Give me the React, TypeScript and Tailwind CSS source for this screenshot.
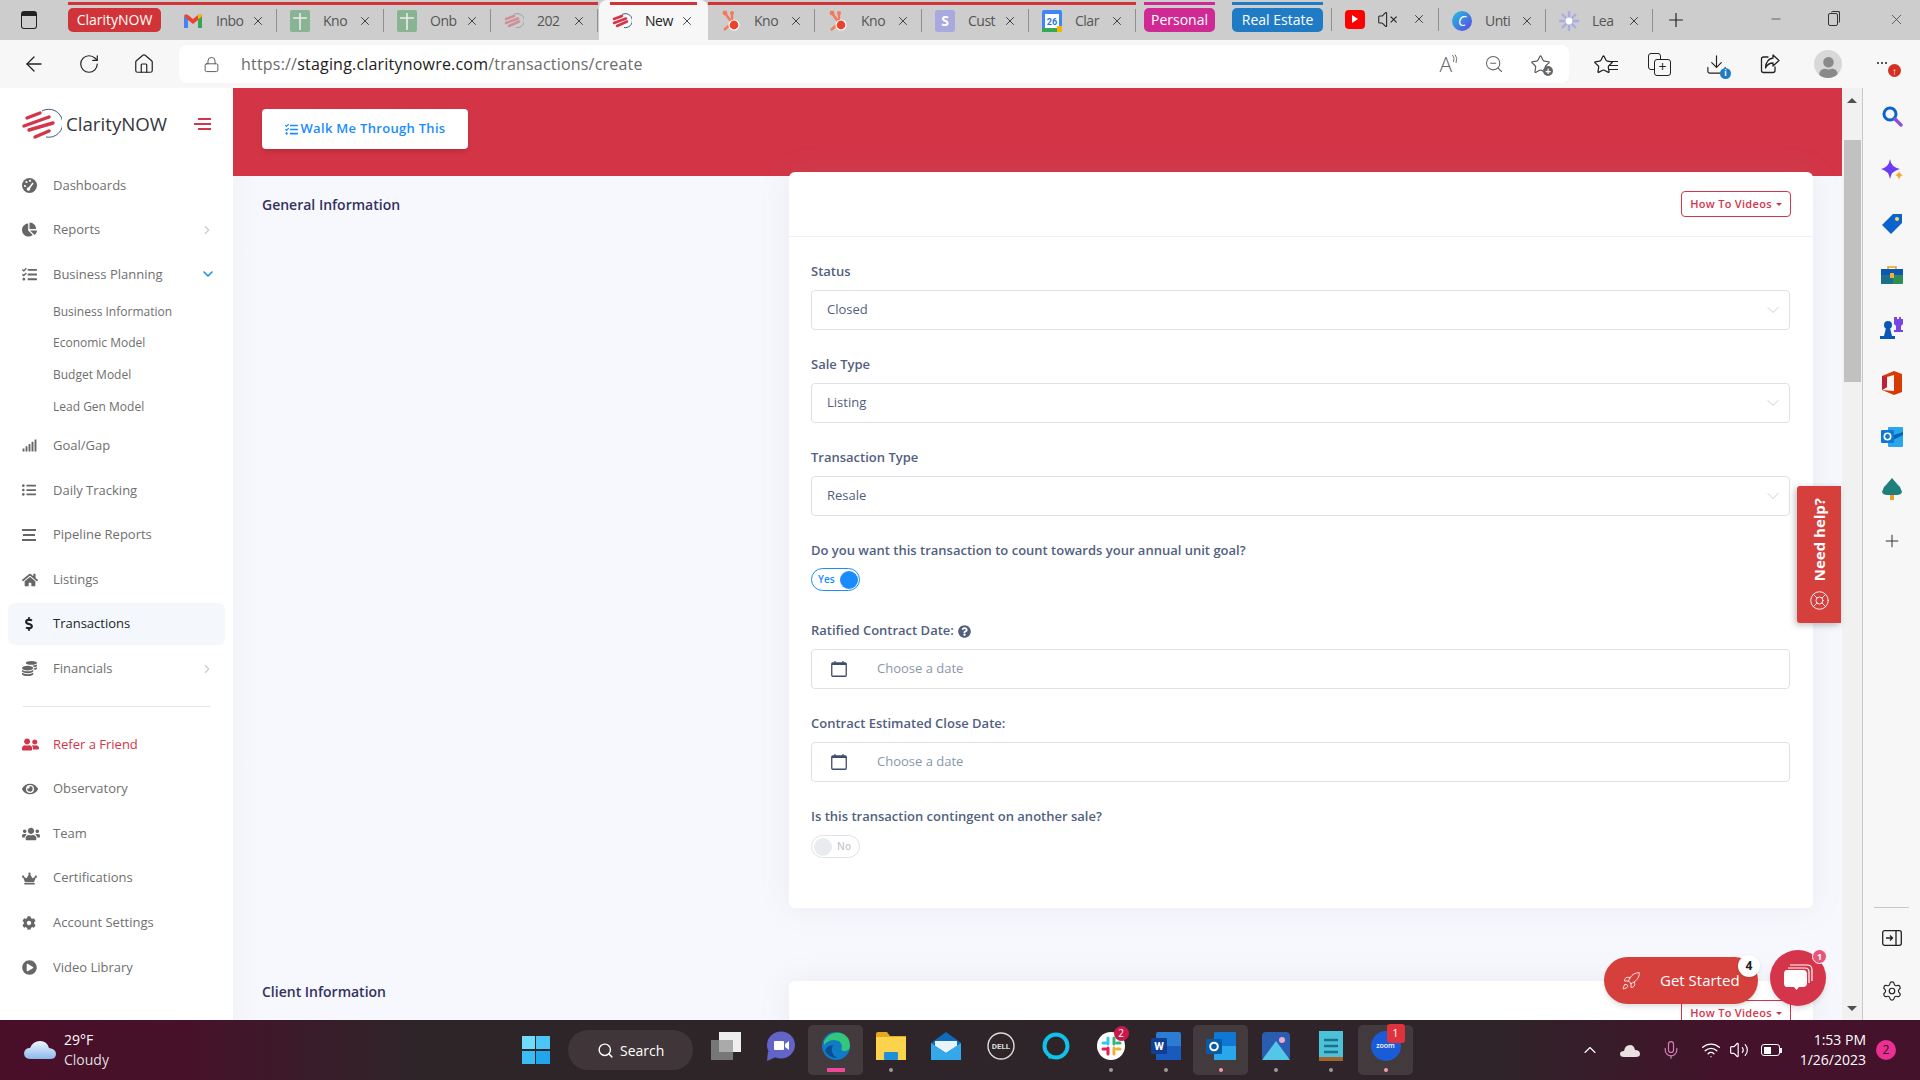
import type { ReactNode } from 'react';
import {
  ArrowLeft, RotateCw, Home, Lock, ZoomOut, Minus, X, Plus, ChevronRight, ChevronDown,
  ChevronUp, LifeBuoy, Mic, Wifi, Volume2, Settings, Search, Rocket, VolumeX, Download, Star,
} from 'lucide-react';
import {
  FaChartPie, FaTasks, FaSignal, FaListUl, FaHome, FaDollarSign, FaCoins,
  FaUserFriends, FaEye, FaUsers, FaCrown, FaCog, FaPlayCircle, FaQuestionCircle, FaUser,
} from 'react-icons/fa';

const LogoMark = () => (
  <svg width="40" height="32" viewBox="0 0 40 32" fill="none">
    <path d="M20 3 A14 14 0 1 1 24 29" stroke="#3d5a78" strokeWidth="1" />
    <g stroke="#d5354a" strokeWidth="3.4" strokeLinecap="round">
      <path d="M5 10 L18 5" />
      <path d="M2 18 L27 9" />
      <path d="M7 22 L31 15" />
      <path d="M13 29 L27 23" />
    </g>
  </svg>
);

const Gmail = () => (
  <svg width="18" height="14" viewBox="0 0 18 14">
    <path d="M0 2 L0 14 L4 14 L4 5 Z" fill="#4285f4" />
    <path d="M18 2 L18 14 L14 14 L14 5 Z" fill="#34a853" />
    <path d="M0 2 Q1 -1 4 1 L9 5 L14 1 Q17 -1 18 2 L14 6 L9 10 L4 6 Z" fill="#ea4335" />
    <path d="M14 1 Q17 -1 18 2 L14 5.5 Z" fill="#fbbc04" />
  </svg>
);

const Sheet = () => (
  <svg width="20" height="22" viewBox="0 0 20 22" className="opacity-60">
    <rect width="20" height="22" rx="2" fill="#5ba56f" />
    <path d="M3 8 H17 M10 3 V20" stroke="#fff" strokeWidth="1.6" />
  </svg>
);

const ClarityTab = ({ faded }: { faded?: boolean }) => (
  <svg width="20" height="18" viewBox="0 0 40 32" fill="none" className={faded ? 'opacity-40' : ''}>
    <path d="M20 3 A14 14 0 1 1 24 29" stroke="#3d5a78" strokeWidth="2" />
    <g stroke="#d5354a" strokeWidth="5" strokeLinecap="round">
      <path d="M4 12 L20 6" />
      <path d="M4 20 L28 11" />
      <path d="M10 26 L30 17" />
    </g>
  </svg>
);

const Hub = () => (
  <svg width="20" height="22" viewBox="0 0 20 22" fill="none">
    <path d="M4 3 L11 13 M11 13 V3 M11 13 L3 20" stroke="#f47a5c" strokeWidth="2.4" />
    <circle cx="4" cy="3" r="2.4" fill="#f47a5c" />
    <circle cx="11" cy="3" r="2" fill="#f47a5c" />
    <circle cx="13" cy="15" r="5" fill="#e8432e" stroke="#fff" strokeWidth="1.2" />
  </svg>
);

const SDoc = () => (
  <div className="flex h-[22px] w-[20px] items-center justify-center rounded-[3px] bg-[#a7a9df] text-[14px] font-bold leading-none text-white">S</div>
);

const GCal = () => (
  <svg width="20" height="22" viewBox="0 0 20 22">
    <rect width="20" height="22" rx="2" fill="#4285f4" />
    <rect x="3" y="4" width="14" height="14" fill="#fff" />
    <rect y="18" width="15" height="4" fill="#34a853" />
    <rect x="15" y="16" width="5" height="6" fill="#f4b400" />
    <text x="10" y="15" fontSize="9" fontWeight="700" textAnchor="middle" fill="#1a73e8" fontFamily="Roboto, sans-serif">26</text>
  </svg>
);

const Canva = () => (
  <div className="flex h-5 w-5 items-center justify-center rounded-full bg-[linear-gradient(135deg,#23c4d8,#5a45e8)] text-[14px] italic leading-none text-white">C</div>
);

const Spark = () => (
  <svg width="22" height="22" viewBox="0 0 22 22" stroke="#a9addf" strokeWidth="2.4">
    <path d="M11 1 V21 M1 11 H21 M4 4 L18 18 M18 4 L4 18" />
    <circle cx="11" cy="11" r="3.4" fill="#fff" stroke="none" />
  </svg>
);

function Tab({ icon, title, bar, active }: { icon: ReactNode; title: string; bar?: string; active?: boolean }) {
  return (
    <div className={`flex h-10 flex-col ${active ? 'w-[109px] rounded-t-lg bg-[#f7f7f7]' : 'w-[107px]'}`}>
      <div className={`mt-[2px] h-[3px] shrink-0 ${active ? 'mx-[11px]' : ''} ${bar ?? ''}`} />
      <div className="-mt-[1px] flex flex-1 items-center pb-[3px]">
        <div className="flex w-[46px] shrink-0 justify-center">{icon}</div>
        <span className={`w-[27px] whitespace-nowrap text-[14px] tracking-[-0.5px] ${active ? 'text-[#222]' : 'text-[#555]'}`}>{title}</span>
        <X className="ml-[8px] text-[#222]" size={14} strokeWidth={1.4} />
        {!active && <div className="ml-auto h-[23px] w-px bg-[#8f8f8f]" />}
      </div>
    </div>
  );
}

function TabBar() {
  return (
    <div className="flex h-10 shrink-0 items-start bg-[#cdcdcd] font-['Open_Sans',sans-serif]">
      <div className="flex h-10 w-[68px] shrink-0 items-center pl-[21px]">
        <div className="h-[18px] w-[16px] rounded-[3px] border-[1.5px] border-[#222] border-t-[5px]" />
      </div>
      <div className="mt-[2px] w-[93px] shrink-0">
        <div className="h-[3px] bg-[#d13438]" />
        <div className="mt-[3px] flex h-6 items-center justify-center rounded-[5px] bg-[#d13438] pb-[1px] text-[14px] text-white">ClarityNOW</div>
      </div>
      <div className="w-[9px] shrink-0">
        <div className="mt-[2px] h-[3px] bg-[#d13438]" />
      </div>
      <Tab icon={<Gmail />} title="Inbo" bar="bg-[#d13438]" />
      <Tab icon={<Sheet />} title="Kno" bar="bg-[#d13438]" />
      <Tab icon={<Sheet />} title="Onb" bar="bg-[#d13438]" />
      <div className="w-[108px]">
        <Tab icon={<ClarityTab faded />} title="202" bar="bg-[#d13438]" />
      </div>
      <Tab icon={<ClarityTab />} title="New" bar="bg-[#d13438]" active />
      <Tab icon={<Hub />} title="Kno" bar="bg-[#d13438]" />
      <Tab icon={<Hub />} title="Kno" bar="bg-[#d13438]" />
      <Tab icon={<SDoc />} title="Cust" bar="bg-[#d13438]" />
      <Tab icon={<GCal />} title="Clar" bar="bg-[#d13438]" />
      <div className="ml-[8px] mt-[2px] w-[71px] shrink-0">
        <div className="h-[3px] bg-[#cf2a93]" />
        <div className="mt-[3px] flex h-6 items-center justify-center rounded-[5px] bg-[#cf2a93] pb-[1px] text-[14px] text-white">Personal</div>
      </div>
      <div className="ml-[17px] mt-[2px] w-[91px] shrink-0">
        <div className="h-[3px] bg-[#1f7cc4]" />
        <div className="mt-[3px] flex h-6 items-center justify-center rounded-[5px] bg-[#1f7cc4] pb-[1px] text-[14px] text-white">Real Estate</div>
      </div>
      <div className="mt-[8px] ml-[8px] h-[23px] w-px bg-[#8f8f8f]" />
      <div className="flex h-10 w-[107px] shrink-0 items-center pb-[2px]">
        <div className="ml-[13px] flex h-[19px] w-[20px] items-center justify-center rounded-[4px] bg-[#f00]">
          <div className="h-0 w-0 border-y-[4px] border-l-[6px] border-y-transparent border-l-white" />
        </div>
        <VolumeX className="ml-[12px] text-[#222]" size={21} strokeWidth={1.2} />
        <X className="ml-[14px] text-[#222]" size={14} strokeWidth={1.4} />
        <div className="ml-auto h-[23px] w-px bg-[#8f8f8f]" />
      </div>
      <Tab icon={<Canva />} title="Unti" />
      <Tab icon={<Spark />} title="Lea" />
      <Plus className="ml-[12px] mt-[9px] text-[#222]" size={22} strokeWidth={1.3} />
      <Minus className="ml-[82px] mt-[12px] text-[#333]" size={14} strokeWidth={1.2} />
      <div className="relative ml-[45px] mt-[13px] h-[13px] w-[10px] rounded-[2px] border border-[#333]">
        <div className="absolute -right-[3px] -top-[3px] h-[12px] w-[9px] rounded-[2px] border-r border-t border-[#333]" />
      </div>
      <X className="ml-[50px] mt-[11px] text-[#333]" size={17} strokeWidth={1} />
    </div>
  );
}

const FavPlus = () => (
  <div className="relative">
    <Star size={21} strokeWidth={1.3} className="text-[#555]" />
    <div className="absolute -bottom-[1px] -right-[2px] flex h-[10px] w-[10px] items-center justify-center rounded-full bg-[#666] text-[10px] font-bold leading-none text-white">+</div>
  </div>
);

const Collections = () => (
  <div className="relative h-[23px] w-[23px]">
    <div className="absolute left-0 top-0 h-[17px] w-[13px] rounded-[3px] border-[1.3px] border-[#222]" />
    <div className="absolute bottom-0 right-0 flex h-[17px] w-[17px] items-center justify-center rounded-[3px] border-[1.3px] border-[#222] bg-[#f7f7f7] text-[14px] leading-none text-[#222]">+</div>
  </div>
);

const ShareBox = () => (
  <svg width="22" height="22" viewBox="0 0 22 22" fill="none" stroke="#222" strokeWidth="1.3" strokeLinejoin="round" strokeLinecap="round">
    <path d="M9 4 H4.500 Q2.500 4 2.500 6 V17.500 Q2.500 19.500 4.500 19.500 H14 Q16 19.500 16 17.500 V14" />
    <path d="M14 2 L20 7.500 L14 13 V10 Q9 10 6.500 15 Q7 6 14 5 Z" />
  </svg>
);

function AddressBar() {
  return (
    <div className="flex h-12 shrink-0 items-center bg-[#f7f7f7] font-['Open_Sans',sans-serif]">
      <ArrowLeft className="ml-[22px] text-[#222]" size={24} strokeWidth={1.3} />
      <RotateCw className="ml-[32px] text-[#222]" size={22} strokeWidth={1.3} />
      <Home className="ml-[33px] text-[#222]" size={22} strokeWidth={1.3} />
      <div className="ml-[24px] flex h-[38px] w-[1390px] items-center rounded-lg bg-white">
        <Lock className="ml-[24px] text-[#555]" size={17} strokeWidth={1.3} />
        <div className="ml-[21px] whitespace-nowrap text-[16px] tracking-[0.2px] text-[#6b6b6b]">
          https://<span className="text-[#1c1c1c]">staging.claritynowre.com</span>/transactions/create
        </div>
        <div className="ml-auto flex items-center pr-[18px]">
          <span className="text-[21px] font-light leading-none text-[#666]">A</span>
          <svg className="-mt-[10px] mr-[-6px]" width="6" height="10" viewBox="0 0 6 10" fill="none" stroke="#666" strokeWidth="0.9"><path d="M0.500 1 Q3 4 1.500 8 M3 0.500 Q6 4 4 9" /></svg>
          <ZoomOut className="ml-[32px] text-[#666]" size={20} strokeWidth={1.3} />
          <div className="ml-[26px]"><FavPlus /></div>
        </div>
      </div>
      <div className="ml-[24px]"><div className="relative">
        <Star size={21} strokeWidth={1.4} className="text-[#222]" />
        <div className="absolute -right-[4px] top-[7px] h-[9px] w-[9px] border-y border-[#222] after:mt-[3px] after:block after:h-px after:bg-[#222]" />
      </div></div>
      <div className="ml-[34px]"><Collections /></div>
      <div className="relative ml-[34px]">
        <Download size={23} strokeWidth={1.2} className="text-[#222]" />
        <div className="absolute -bottom-[3px] -right-[3px] flex h-[11px] w-[11px] items-center justify-center rounded-full bg-[#1f7cc4] text-[8px] font-bold leading-none text-white">i</div>
      </div>
      <div className="ml-[31px]"><ShareBox /></div>
      <div className="ml-[33px] flex h-[28px] w-[28px] items-end justify-center overflow-hidden rounded-full bg-[#d8d8d8]">
        <FaUser className="text-[#8a8a8a]" size={21} />
      </div>
      <div className="relative ml-[35px] -mt-[2px] flex gap-[2px]">
        <div className="h-[2px] w-[2px] rounded-full bg-[#222]" />
        <div className="h-[2px] w-[2px] rounded-full bg-[#222]" />
        <div className="h-[2px] w-[2px] rounded-full bg-[#222]" />
        <div className="absolute -top-[1px] left-[11px] mt-[3px] flex h-[13px] w-[13px] items-center justify-center rounded-full bg-[#d32f22] text-[10px] font-bold leading-none text-white">↑</div>
      </div>
    </div>
  );
}

const GaugeIcon = () => (
  <svg width="15" height="15" viewBox="0 0 15 15">
    <circle cx="7.500" cy="7.500" r="7.500" fill="#666" />
    <circle cx="3" cy="8" r="1.100" fill="#fff" />
    <circle cx="4.500" cy="4" r="1.100" fill="#fff" />
    <circle cx="8" cy="2.800" r="1.100" fill="#fff" />
    <path d="M6.500 11 L11 5" stroke="#fff" strokeWidth="1.500" />
    <circle cx="6.500" cy="11" r="1.800" fill="#fff" />
  </svg>
);

type NavItem = { label: string; icon: ReactNode; chevron?: boolean; active?: boolean; red?: boolean };

const topNav: NavItem[] = [
  { label: 'Dashboards', icon: <GaugeIcon /> },
  { label: 'Reports', icon: <FaChartPie size={15} />, chevron: true },
];
const midNav: NavItem[] = [
  { label: 'Goal/Gap', icon: <FaSignal size={15} /> },
  { label: 'Daily Tracking', icon: <FaListUl size={14} /> },
  {
    label: 'Pipeline Reports',
    icon: (
      <div className="flex w-[14px] flex-col gap-[3.5px]">
        <div className="h-[1.5px] bg-[#666]" />
        <div className="mx-[1px] h-[1.5px] bg-[#666]" />
        <div className="h-[1.5px] bg-[#666]" />
      </div>
    ),
  },
  { label: 'Listings', icon: <FaHome size={16} /> },
  { label: 'Transactions', icon: <FaDollarSign size={14} />, active: true },
  { label: 'Financials', icon: <FaCoins size={15} />, chevron: true },
];
const bottomNav: NavItem[] = [
  { label: 'Refer a Friend', icon: <FaUserFriends size={17} />, red: true },
  { label: 'Observatory', icon: <FaEye size={16} /> },
  { label: 'Team', icon: <FaUsers size={18} /> },
  { label: 'Certifications', icon: <FaCrown size={15} /> },
  { label: 'Account Settings', icon: <FaCog size={14} /> },
  { label: 'Video Library', icon: <FaPlayCircle size={15} /> },
];

function NavRow({ item }: { item: NavItem }) {
  const color = item.red ? 'text-[#d5354a]' : item.active ? 'text-[#212529]' : 'text-[#6f6f6f]';
  return (
    <div className="flex h-[44.6px] items-center px-2">
      <div className={`flex h-[42px] w-[218px] items-center rounded-md ${item.active ? 'bg-[#f4f8fc]' : ''} ${color}`}>
        <div className={`ml-[14px] flex w-[31px] shrink-0 ${item.active ? 'text-[#222]' : item.red ? '' : 'text-[#666]'}`}>{item.icon}</div>
        <span className="text-[13px]">{item.label}</span>
        {item.chevron && <ChevronRight className="ml-auto mr-[11px] text-[#c6ccd4]" size={14} strokeWidth={2} />}
      </div>
    </div>
  );
}

function Sidebar() {
  return (
    <div className="w-[233px] shrink-0 bg-white font-['Open_Sans',sans-serif]">
      <div className="flex h-[75px] items-center pb-[3px] pl-[22px]">
        <LogoMark />
        <span className="ml-[4px] text-[18.7px] leading-none text-[#33373d]">ClarityNOW</span>
        <div className="ml-[27px] flex w-[17px] flex-col items-end gap-[3px]">
          <div className="h-[2px] w-[13px] bg-[#d5354a]" />
          <div className="h-[2px] w-[17px] bg-[#d5354a]" />
          <div className="h-[2px] w-[13px] bg-[#d5354a]" />
        </div>
      </div>
      {topNav.map((item) => <NavRow key={item.label} item={item} />)}
      <div className="flex h-[44.6px] items-center px-2 text-[#6f6f6f]">
        <div className="ml-[14px] flex w-[31px] shrink-0 text-[#666]"><FaTasks size={15} /></div>
        <span className="text-[13px]">Business Planning</span>
        <ChevronDown className="ml-auto mr-[9px] text-[#1a8cff]" size={16} strokeWidth={2.4} />
      </div>
      <div className="-mt-[1px] mb-[1px] flex flex-col pl-[53px] text-[12px] text-[#6f6f6f]">
        {['Business Information', 'Economic Model', 'Budget Model', 'Lead Gen Model'].map((t) => (
          <div key={t} className="flex h-[31.7px] items-center">{t}</div>
        ))}
      </div>
      {midNav.map((item) => <NavRow key={item.label} item={item} />)}
      <div className="mx-[23px] my-[15px] h-px bg-[#e2e4e8]" />
      {bottomNav.map((item) => <NavRow key={item.label} item={item} />)}
    </div>
  );
}

const HowTo = () => (
  <div className="flex h-[26px] w-[110px] items-center justify-center rounded-[4px] border border-[#d5354a] text-[11px] font-semibold tracking-[0.3px] text-[#d5354a]">
    How To Videos
    <div className="ml-[4px] h-0 w-0 border-x-[3px] border-t-[3px] border-x-transparent border-t-[#d5354a]" />
  </div>
);

function Label({ children }: { children: ReactNode }) {
  return <div className="flex h-5 items-center text-[13px] font-semibold text-[#525f7f]">{children}</div>;
}

function SelectField({ label, value }: { label: string; value: string }) {
  return (
    <>
      <Label>{label}</Label>
      <div className="mb-[25px] mt-2 flex h-10 items-center rounded-[4px] border border-[#dee2e6] pl-[15px] pr-[6px] text-[13px] text-[#525f7f]">
        {value}
        <ChevronDown className="ml-auto text-[#c3c7cf]" size={20} strokeWidth={1} />
      </div>
    </>
  );
}

const CalendarIcon = () => (
  <svg width="16" height="16" viewBox="0 0 16 16" fill="none" stroke="#3f4d6b">
    <rect x="0.750" y="2" width="14.500" height="13.250" rx="1" strokeWidth="1.300" />
    <path d="M0.750 3 H15.250" strokeWidth="2" />
    <path d="M4 0 V2 M12 0 V2" strokeWidth="1.200" />
  </svg>
);

function DateField({ label, help }: { label: string; help?: boolean }) {
  return (
    <>
      <Label>
        {label}
        {help && <FaQuestionCircle className="ml-[4px] text-[#525f7f]" size={13} />}
      </Label>
      <div className="mb-[25px] mt-2 flex h-10 items-center rounded-[4px] border border-[#dee2e6] text-[13px] text-[#8898aa]">
        <div className="ml-[19px]"><CalendarIcon /></div>
        <span className="ml-[30px]">Choose a date</span>
      </div>
    </>
  );
}

function Toggle({ on }: { on: boolean }) {
  return on ? (
    <div className="mt-[7px] flex h-[23px] w-[49px] items-center justify-between rounded-full border border-[#1a8cff] bg-white pl-[6px] pr-[1px] text-[10px] font-semibold text-[#1a8cff]">
      Yes
      <div className="h-[18px] w-[18px] rounded-full bg-[#1a8cff]" />
    </div>
  ) : (
    <div className="mt-2 flex h-[23px] w-[49px] items-center justify-between rounded-full border border-[#dee2e6] bg-white pl-[2px] pr-[8px] text-[10px] font-semibold text-[#c4c9d0]">
      <div className="h-[18px] w-[18px] rounded-full bg-[#e9ecef]" />
      No
    </div>
  );
}

function Content() {
  return (
    <div className="relative min-w-0 flex-1 overflow-hidden bg-[linear-gradient(90deg,#f2f4f9_0,#f7f8fd_27px)] font-['Open_Sans',sans-serif]">
      <div className="h-[88px] bg-[#d33546] pl-[29px] pt-[21px]">
        <div className="flex h-10 w-[206px] items-center justify-center gap-[3px] rounded-[4px] bg-white text-[13px] font-semibold tracking-[0.3px] text-[#1a8cff] shadow-md">
          <FaTasks size={13} />
          Walk Me Through This
        </div>
      </div>
      <div className="flex px-[29px]">
        <div className="w-[527px] shrink-0 pt-[19px] text-[14px] font-semibold leading-5 text-[#32325d]">General Information</div>
        <div className="relative -mt-1 h-[736px] w-[1024px] rounded-md bg-white shadow-[0_0_30px_rgba(136,152,170,0.12)]">
          <div className="flex h-[65px] items-start justify-end border-b border-[#eef0f4] pr-[22px] pt-[19px]">
            <HowTo />
          </div>
          <div className="px-[22px] pr-[23px] pt-[25px]">
            <SelectField label="Status" value="Closed" />
            <SelectField label="Sale Type" value="Listing" />
            <SelectField label="Transaction Type" value="Resale" />
            <Label>Do you want this transaction to count towards your annual unit goal?</Label>
            <Toggle on />
            <div className="h-[30px]" />
            <DateField label="Ratified Contract Date:" help />
            <DateField label="Contract Estimated Close Date:" />
            <Label>Is this transaction contingent on another sale?</Label>
            <Toggle on={false} />
          </div>
        </div>
      </div>
      <div className="mt-[56px] flex px-[29px]">
        <div className="w-[527px] shrink-0 pt-[18px] text-[14px] font-semibold leading-5 text-[#32325d]">Client Information</div>
        <div className="mt-[17px] h-[100px] w-[1024px] rounded-md bg-white shadow-[0_0_30px_rgba(136,152,170,0.12)]">
          <div className="flex justify-end pr-[22px] pt-[19px]"><HowTo /></div>
        </div>
      </div>
    </div>
  );
}

function Scrollbar() {
  return (
    <div className="flex w-5 shrink-0 flex-col items-center bg-[#f1f1f1]">
      <div className="mt-[10px] h-0 w-0 border-x-[5px] border-b-[5px] border-x-transparent border-b-[#505050]" />
      <div className="mt-[37px] h-[242px] w-[17px] bg-[#c1c1c1]" />
      <div className="mt-auto mb-[9px] h-0 w-0 border-x-[5px] border-t-[5px] border-x-transparent border-t-[#505050]" />
    </div>
  );
}

const railIcons: ReactNode[] = [
  <svg key="s" width="22" height="22" viewBox="0 0 22 22" fill="none"><circle cx="9" cy="9" r="6" stroke="#0b63ce" strokeWidth="3" /><path d="M14 14 L20 20" stroke="#8a4fe0" strokeWidth="3.4" strokeLinecap="round" /></svg>,
  <svg key="d" width="24" height="24" viewBox="0 0 24 24"><path d="M10 1 Q11 9 20 11 Q11 13 10 21 Q9 13 1 11 Q9 9 10 1Z" fill="#6a3df0" /><path d="M19 13 Q19.500 16 23 17 Q19.500 18 19 22 Q18.500 18 15 17 Q18.500 16 19 13Z" fill="#f0a92c" /></svg>,
  <svg key="t" width="22" height="22" viewBox="0 0 22 22"><path d="M1 12 L12 1 L21 1 L21 10 L10 21 Z" fill="#0b63ce" /><circle cx="16" cy="6" r="2" fill="#ffd75e" /></svg>,
  <svg key="b" width="22" height="20" viewBox="0 0 22 20" fill="none"><path d="M7 5 V2 H15 V5" stroke="#e8a21d" strokeWidth="1.6" /><rect y="4" width="22" height="7" fill="#0b57b5" /><rect y="10" width="22" height="9" rx="1" fill="#2e8c57" /><rect y="10" width="12" height="9" fill="#1c6f88" /><rect x="9" y="8" width="4" height="5" fill="#f2b02e" /></svg>,
  <svg key="c" width="24" height="24" viewBox="0 0 24 24"><path d="M15 1 H17 V3 H19 V1 H21 V3 H23 V1 V8 L21 10 V14 H23 V16 H14 V14 H16 V10 L14 8 V1Z" fill="#7a45e6" /><circle cx="8" cy="9" r="4" fill="#0b57b5" /><path d="M6 12 H10 L12 20 H15 V23 H0 V20 H4 Z" fill="#0b57b5" /></svg>,
  <svg key="o" width="22" height="24" viewBox="0 0 22 24"><path d="M13 0 L21 3 V21 L13 24 L1 19 L13 20 V4 L6 6 V16 L1 19 V5 Z" fill="#d83b01" /><path d="M1 5 L6 6 V16 L1 19 Z" fill="#c41e3a" /></svg>,
  <svg key="l" width="22" height="22" viewBox="0 0 22 22"><rect x="7" y="1" width="15" height="20" rx="1" fill="#28a8ea" /><path d="M7 11 L22 6 V9 L12 14Z" fill="#0364b8" /><rect y="4" width="13" height="13" rx="1" fill="#0f78d4" /><circle cx="6.500" cy="10.500" r="3.200" fill="none" stroke="#fff" strokeWidth="1.600" /></svg>,
  <svg key="r" width="22" height="22" viewBox="0 0 22 22"><rect x="9" y="16" width="4" height="6" fill="#e8a21d" /><path d="M11 0 L17 7 L19 9 L21 14 Q20 17 16 17 H6 Q2 17 1 14 L3 9 L5 7Z" fill="#1f7f7a" /></svg>,
];

function RightRail() {
  return (
    <div className="flex w-[58px] shrink-0 flex-col items-center border-l border-[#c8c8c8] bg-[#f7f7f7]">
      <div className="mt-[17px] flex h-[446px] flex-col items-center justify-between">
        {railIcons.map((icon) => icon)}
        <Plus className="text-[#333]" size={20} strokeWidth={1.2} />
      </div>
      <div className="mt-auto mb-[22px] h-px w-[35px] bg-[#c8c8c8]" />
      <svg className="mb-[34px]" width="20" height="16" viewBox="0 0 20 16" fill="none" stroke="#222" strokeWidth="1.300">
        <rect x="0.700" y="0.700" width="18.600" height="14.600" rx="2" />
        <path d="M14 1 V15 M4 8 H10 M8 5.500 L10.500 8 L8 10.500" />
      </svg>
      <Settings className="mb-[18px] text-[#222]" size={22} strokeWidth={1.3} />
    </div>
  );
}

const Cloud = () => (
  <svg width="32" height="20" viewBox="0 0 32 20">
    <defs>
      <linearGradient id="cl" x1="0" y1="0" x2="0" y2="1">
        <stop offset="0" stopColor="#eef6ff" />
        <stop offset="1" stopColor="#8db8ec" />
      </linearGradient>
    </defs>
    <path d="M7 19 Q0 19 0 13 Q1 8 6 8 Q9 1 16 1 Q23 1 25 8 Q32 9 32 14 Q32 19 26 19 Z" fill="url(#cl)" />
  </svg>
);

const Win = () => (
  <div className="grid h-[28px] w-[28px] grid-cols-2 gap-[1.5px]">
    <div className="bg-[#6fdcfb]" /><div className="bg-[#4cc6f7]" /><div className="bg-[#3bbcf5]" /><div className="bg-[#1fa6ee]" />
  </div>
);

const taskIcons: { key: string; el: ReactNode; dot?: string; hi?: boolean }[] = [
  { key: 'tasks', el: <div className="relative h-[28px] w-[30px]"><div className="absolute bottom-0 left-0 h-[20px] w-[22px] bg-[#777]" /><div className="absolute right-0 top-0 h-[20px] w-[22px] bg-[#eee]" /><div className="absolute left-[8px] top-[8px] h-[12px] w-[14px] bg-[#aaa]" /></div> },
  { key: 'chat', el: <svg width="30" height="30" viewBox="0 0 30 30"><ellipse cx="15" cy="14" rx="14" ry="13.500" fill="#6264c8" /><path d="M2 20 L1 30 L10 26Z" fill="#6264c8" /><rect x="8" y="10" width="10" height="9" rx="1" fill="#fff" /><path d="M19 13 L23 10 V19 L19 16Z" fill="#fff" /></svg> },
  { key: 'edge', hi: true, el: <svg width="30" height="30" viewBox="0 0 30 30"><circle cx="15" cy="15" r="14" fill="#0f7cc4" /><path d="M3 10 Q9 0 20 2 Q29 5 29 15 Q29 20 23 20 Q19 20 21 15 Q20 9 13 9 Q7 9 3 14Z" fill="#34c77b" /><path d="M12 14 Q8 22 16 27 Q8 27 4 20 Q6 14 12 14Z" fill="#0a4f96" /></svg>, dot: 'w-[18px] h-[3px] bg-[#ec4a97]' },
  { key: 'files', el: <svg width="30" height="28" viewBox="0 0 30 28"><path d="M0 2 Q0 0 2 0 H11 L14 4 H30 V28 H0Z" fill="#e6a823" /><rect y="5" width="30" height="23" fill="#fcd34d" /><rect x="8" y="20" width="14" height="8" rx="1" fill="#1f8fd8" /></svg>, dot: 'w-[4px] h-[4px] bg-[#9a9a9a] rounded-full' },
  { key: 'mail', el: <svg width="30" height="28" viewBox="0 0 30 28"><path d="M15 0 L30 11 V28 H0 V11Z" fill="#0f6cbd" /><path d="M4 9 H26 V14 L15 21 L4 14Z" fill="#e8f3fb" /><path d="M0 11 L15 21 L30 11 V28 H0Z" fill="#34a8e8" /></svg> },
  { key: 'dell', el: <svg width="28" height="28" viewBox="0 0 28 28"><circle cx="14" cy="14" r="13" fill="none" stroke="#ddd" strokeWidth="1.400" /><text x="14" y="17" textAnchor="middle" fontSize="8" fontWeight="700" fill="#ddd" fontFamily="Roboto, sans-serif">DELL</text></svg> },
  { key: 'alexa', el: <svg width="30" height="30" viewBox="0 0 30 30" fill="none"><circle cx="15" cy="15" r="11.500" stroke="#11c2e8" strokeWidth="4" /><path d="M8 28 L6 22 L12 26Z" fill="#11c2e8" /></svg> },
  { key: 'slack', el: <div className="relative"><svg width="28" height="28" viewBox="0 0 28 28"><circle cx="14" cy="14" r="14" fill="#fff" /><g strokeWidth="3" strokeLinecap="round"><path d="M11 6 V12 M6 11 H9" stroke="#36c5f0" /><path d="M17 6 V12 M20 11 H23" stroke="#2eb67d" /><path d="M17 22 V16 M20 17 H23" stroke="#ecb22e" /><path d="M11 22 V16 M6 17 H9" stroke="#e01e5a" /></g></svg><div className="absolute -right-[4px] -top-[6px] flex h-[15px] w-[15px] items-center justify-center rounded-full bg-[#c9184a] text-[10px] text-white">2</div></div>, dot: 'w-[4px] h-[4px] bg-[#9a9a9a] rounded-full' },
  { key: 'word', el: <svg width="30" height="28" viewBox="0 0 30 28"><rect x="5" y="0" width="25" height="28" rx="2" fill="#2b7cd3" /><rect x="5" y="14" width="25" height="14" fill="#185abd" /><rect y="6" width="16" height="16" rx="1" fill="#103f91" /><text x="8" y="18" textAnchor="middle" fontSize="11" fontWeight="700" fill="#fff" fontFamily="Roboto, sans-serif">W</text></svg>, dot: 'w-[4px] h-[4px] bg-[#9a9a9a] rounded-full' },
  { key: 'outlook', hi: true, el: <svg width="30" height="28" viewBox="0 0 30 28"><rect x="8" y="0" width="22" height="28" rx="1" fill="#0f78d4" /><rect x="8" y="14" width="22" height="14" fill="#28a8ea" /><rect y="7" width="16" height="15" rx="1" fill="#0a5ba6" /><circle cx="8" cy="14.500" r="3.800" fill="none" stroke="#fff" strokeWidth="2" /></svg>, dot: 'w-[4px] h-[4px] bg-[#f0a0a8] rounded-full' },
  { key: 'photos', el: <svg width="28" height="28" viewBox="0 0 28 28"><rect width="28" height="28" rx="4" fill="#2a5db0" /><path d="M0 28 L14 9 L28 28Z" fill="#54c6e8" /><circle cx="20" cy="8" r="3" fill="#f0a8c8" /></svg>, dot: 'w-[4px] h-[4px] bg-[#9a9a9a] rounded-full' },
  { key: 'notes', el: <svg width="24" height="30" viewBox="0 0 24 30"><rect width="24" height="30" fill="#4cc2d8" /><rect y="26" width="24" height="4" fill="#a4622c" /><path d="M5 9 H19 M5 15 H19 M5 21 H19" stroke="#1f6f90" strokeWidth="2.400" /></svg>, dot: 'w-[4px] h-[4px] bg-[#9a9a9a] rounded-full' },
  { key: 'zoom', hi: true, el: <div className="relative"><div className="flex h-[30px] w-[30px] items-center justify-center rounded-full bg-[#1a5bd8] text-[7px] font-semibold text-white">zoom</div><div className="absolute -right-[4px] -top-[7px] flex h-[19px] w-[18px] items-center justify-center rounded-[3px] bg-[#e0323c] text-[11px] text-white">1</div></div>, dot: 'w-[4px] h-[4px] bg-[#f0a0a8] rounded-full' },
];

function Taskbar() {
  return (
    <div className="flex h-[60px] shrink-0 items-center bg-[linear-gradient(90deg,#4a0f28_0%,#46122a_10%,#2e2529_22%,#2e2429_78%,#44122a_90%,#44122a_100%)] font-['Open_Sans',sans-serif] text-white">
      <div className="flex w-[508px] shrink-0 items-center pl-[24px]">
        <Cloud />
        <div className="ml-[8px] text-[14px] leading-[20px]">
          <div>29°F</div>
          <div className="text-[#ddd]">Cloudy</div>
        </div>
      </div>
      <div className="flex w-[55px] shrink-0 justify-center"><Win /></div>
      <div className="ml-[5px] flex h-10 w-[125px] shrink-0 items-center rounded-full bg-[#403639] pl-[29px] text-[14px]">
        <Search size={17} strokeWidth={2} />
        <span className="ml-[6px]">Search</span>
      </div>
      <div className="ml-[5px] flex">
        {taskIcons.map((t) => (
          <div key={t.key} className={`flex h-[50px] w-[55px] shrink-0 flex-col items-center justify-center ${t.hi ? 'rounded-[5px] bg-white/10' : ''}`}>
            <div className="flex h-[36px] items-center">{t.el}</div>
            <div className={`mt-[4px] h-[4px] ${t.dot ?? ''}`} />
          </div>
        ))}
      </div>
      <div className="ml-[167px] flex items-center">
        <ChevronUp size={20} strokeWidth={1.3} />
        <svg className="ml-[20px]" width="20" height="13" viewBox="0 0 20 13"><path d="M4 13 Q0 13 0 10 Q0 7 4 7 Q5 1 10 1 Q14 1 15 6 Q20 6 20 10 Q20 13 16 13Z" fill="#e8e0e3" /></svg>
        <Mic className="ml-[21px] text-[#d880b8]" size={20} strokeWidth={1.4} />
        <Wifi className="ml-[20px]" size={20} strokeWidth={1.6} />
        <Volume2 className="ml-[8px]" size={20} strokeWidth={1.4} />
        <div className="ml-[12px] flex h-[12px] w-[19px] items-center rounded-[3px] border border-white p-[1.5px]"><div className="h-full w-[7px] bg-white" /></div>
        <div className="h-[5px] w-[2px] bg-white" />
      </div>
      <div className="ml-auto text-right text-[14px] leading-[20px]">
        <div>1:53 PM</div>
        <div>1/26/2023</div>
      </div>
      <div className="ml-[10px] mr-[24px] flex h-5 w-5 items-center justify-center rounded-full bg-[#ec2f93] text-[12px] text-[#2a1020]">2</div>
    </div>
  );
}

export default function App() {
  return (
    <div className="flex h-screen w-[1920px] flex-col overflow-hidden bg-white">
      <TabBar />
      <AddressBar />
      <div className="relative flex min-h-0 flex-1">
        <Sidebar />
        <Content />
        <Scrollbar />
        <RightRail />

        {/* floating help widgets */}
        <div className="absolute left-[1797px] top-[398px] flex h-[137px] w-[44px] flex-col items-center justify-between rounded-l-[3px] bg-[#d5403c] pb-[12px] pt-[12px] font-['Open_Sans',sans-serif] text-white shadow-[-2px_2px_6px_rgba(0,0,0,0.25)]">
          <span className="rotate-180 text-[15px] font-bold leading-none [writing-mode:vertical-rl]">Need help?</span>
          <LifeBuoy size={21} strokeWidth={1} />
        </div>
        <div className="absolute left-[1604px] top-[869px] flex h-[47px] w-[154px] items-center rounded-full bg-[#d5403c] pl-[17px] font-['Open_Sans',sans-serif] text-[15px] text-white shadow-md">
          <Rocket size={20} strokeWidth={1} />
          <span className="ml-[19px]">Get Started</span>
          <div className="absolute -right-[2px] -top-[2px] flex h-[22px] w-[22px] items-center justify-center rounded-full bg-white text-[12px] font-bold text-[#222] shadow">4</div>
        </div>
        <div className="absolute left-[1770px] top-[862px] flex h-14 w-14 items-center justify-center rounded-full bg-[#d5354a] shadow-md">
          <svg width="30" height="28" viewBox="0 0 30 28" fill="none">
            <path d="M7 1 H24 Q29 1 29 6 V17" stroke="#fff" strokeWidth="1.200" />
            <path d="M5 4 H22 Q26 4 26 8 V19" stroke="#fff" strokeWidth="1.200" />
            <path d="M4 6 H20 Q24 6 24 10 V19 Q24 23 20 23 H16 L13.500 26 L11 23 H4 Q1 23 1 19 V10 Q1 6 4 6Z" fill="#fff" />
          </svg>
          <div className="absolute -right-[1px] -top-[1px] flex h-[15px] w-[15px] items-center justify-center rounded-full border border-white bg-[#e8557a] text-[9px] font-bold text-white">1</div>
        </div>
      </div>
      <Taskbar />
    </div>
  );
}
